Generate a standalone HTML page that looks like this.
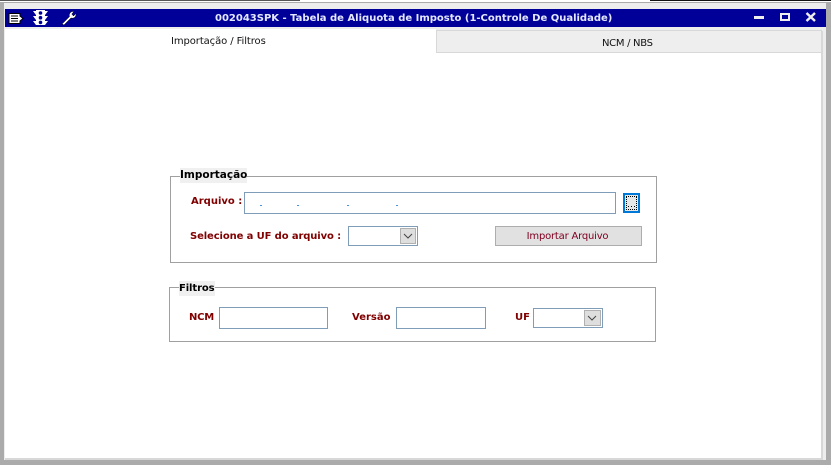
<!DOCTYPE html>
<html lang="pt"><head><meta charset="utf-8"><title>Tabela de Aliquota de Imposto</title>
<style>
html,body{margin:0;padding:0;width:831px;height:465px;overflow:hidden;background:#ababab}
div,span{position:absolute;box-sizing:border-box}
body{font-family:"DejaVu Sans","Liberation Sans",sans-serif;font-size:10px;white-space:nowrap}
.lb{color:#800000;font-weight:bold;font-size:10px;line-height:14px;height:14px}
.in{background:#fff;border:1px solid #7f9db9}
.gb{border:1px solid #a0a0a0}
.lg{background:#f0f0f0;color:#000;font-weight:bold;font-size:10.5px;line-height:14px;height:15px}
.dd{background:#dedede;border:1px solid #b0b0b0}
</style></head>
<body>
<div style="left:0;top:0;width:831px;height:2px;background:#fff"></div>
<div style="left:0;top:0;width:300px;height:1px;background:#555"></div>
<div style="left:650px;top:0;width:181px;height:1px;background:#111"></div>
<div style="left:4px;top:3px;width:822px;height:457px;background:#ededed"></div>

<div style="left:5px;top:9px;width:821px;height:18px;background:#000099"></div>
<svg style="position:absolute;left:5px;top:9px" width="80" height="18" viewBox="0 0 80 18">
<path d="M4 4.500H15V7L18 9.500L15 12V14.500H4Z" fill="#fff" stroke="#000" stroke-width="1"/>
<path d="M6 7H13M6 9.500H13M6 12H13" stroke="#000" stroke-width="1" fill="none"/>
<path d="M31 1H40V16H31Z" fill="#fff"/>
<path d="M28 2H43L40 6H31ZM28 7H43L40 11H31ZM28 12H43L40 16H31Z" fill="#fff"/>
<circle cx="35.500" cy="4" r="1.800" fill="#000099"/><circle cx="35.500" cy="8.700" r="1.800" fill="#000099"/><circle cx="35.500" cy="13.400" r="1.800" fill="#000099"/>
<path d="M57 15L64.500 7.500C63.500 4.500 66 2 69 2.500L66.800 5L68.500 7L71 4.500C71.500 7.500 69 10 66 9L59 16Z" fill="#fff" stroke="#000" stroke-width=".5"/>
</svg>
<div style="left:215px;top:11px;height:16px;line-height:16px;color:#e4e8ff;font-weight:bold;font-size:10px">002043SPK - Tabela de Aliquota de Imposto (1-Controle De Qualidade)</div>
<div style="left:754px;top:16px;width:10px;height:3px;background:#eee"></div>
<div style="left:780px;top:13px;width:10px;height:8px;border:2px solid #eee"></div>
<svg style="position:absolute;left:805px;top:12px" width="12" height="10" viewBox="0 0 12 10"><path d="M1.500 1L10 9M10 1L1.500 9" stroke="#eee" stroke-width="2.400" fill="none"/></svg>

<div style="left:5px;top:30px;width:817px;height:429px;background:#fff"></div>
<div style="left:5px;top:458px;width:818px;height:2px;background:#d8d8d8"></div>
<div style="left:821px;top:31px;width:2px;height:429px;background:#d8d8d8"></div>
<div style="left:5px;top:29px;width:431px;height:1px;background:#fff"></div>
<div style="left:436px;top:30px;width:386px;height:23px;background:#eeeeee;border:1px solid #d8d8d8"></div>
<div style="left:171px;top:35px;height:14px;line-height:14px;font-size:10px;color:#111;letter-spacing:-.09px">Importação / Filtros</div>
<div style="left:602px;top:37px;height:14px;line-height:14px;font-size:10px;color:#111;letter-spacing:-.3px">NCM / NBS</div>

<div class="gb" style="left:170px;top:176px;width:487px;height:87px"></div>
<div class="lg" style="left:180px;top:168px;width:67px">Importação</div>
<div class="lb" style="left:191px;top:195px">Arquivo :</div>
<div class="in" style="left:244px;top:192px;width:372px;height:22px"></div>
<div style="left:260px;top:205px;width:2px;height:1px;background:#4a90e0"></div>
<div style="left:297px;top:205px;width:2px;height:1px;background:#4a90e0"></div>
<div style="left:347px;top:205px;width:2px;height:1px;background:#4a90e0"></div>
<div style="left:396px;top:205px;width:2px;height:1px;background:#4a90e0"></div>
<div style="left:623px;top:193px;width:17px;height:20px;background:#e8e8e8;border:2px solid #0078d7"></div>
<div style="left:626px;top:196px;width:11px;height:14px;border:1px dotted #000"></div>
<div style="left:628px;top:206px;width:1px;height:1px;background:#000"></div>
<div style="left:631px;top:206px;width:1px;height:1px;background:#000"></div>
<div style="left:634px;top:206px;width:1px;height:1px;background:#000"></div>
<div class="lb" style="left:190px;top:230px;letter-spacing:-.12px">Selecione a UF do arquivo :</div>
<div class="in" style="left:348px;top:226px;width:70px;height:20px"></div>
<div class="dd" style="left:400px;top:228px;width:16px;height:16px"></div>
<svg style="position:absolute;left:403px;top:233px" width="10" height="6"><path d="M1 1L5 5L9 1" stroke="#444" fill="none"/></svg>
<div style="left:495px;top:226px;width:147px;height:20px;background:#e1e1e1;border:1px solid #adadad;color:#800020;font-size:10px;line-height:20px;text-align:center;letter-spacing:-.2px;text-indent:-2px">Importar Arquivo</div>

<div class="gb" style="left:169px;top:287px;width:487px;height:55px"></div>
<div class="lg" style="left:179px;top:281px;width:36px;font-size:10px;letter-spacing:-.1px;line-height:15px">Filtros</div>
<div class="lb" style="left:189px;top:311px;letter-spacing:-.2px">NCM</div>
<div class="in" style="left:219px;top:307px;width:109px;height:22px"></div>
<div class="lb" style="left:352px;top:311px">Versão</div>
<div class="in" style="left:396px;top:307px;width:90px;height:22px"></div>
<div class="lb" style="left:515px;top:311px">UF</div>
<div class="in" style="left:533px;top:308px;width:70px;height:20px"></div>
<div class="dd" style="left:584px;top:310px;width:17px;height:16px"></div>
<svg style="position:absolute;left:587px;top:315px" width="10" height="6"><path d="M1 1L5 5L9 1" stroke="#444" fill="none"/></svg>
</body></html>
